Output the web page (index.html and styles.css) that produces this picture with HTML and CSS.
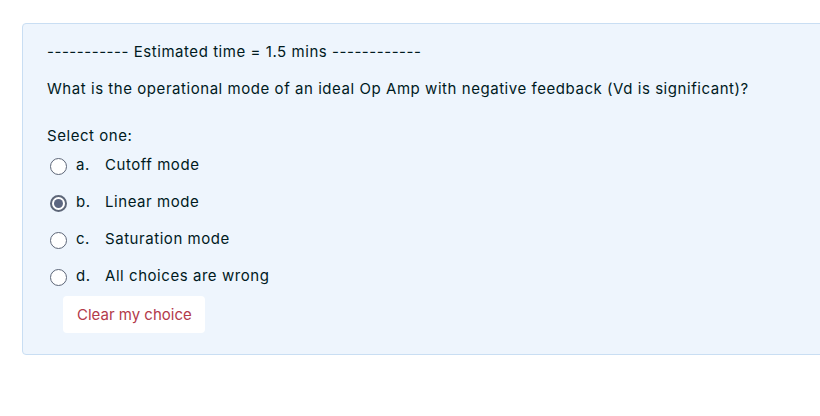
FILE: index.html
```html
<!DOCTYPE html>
<html>
<head>
<meta charset="utf-8">
<link rel="stylesheet" href="styles.css">
</head>
<body>
<div class="page">
  <div class="formulation">
    <p class="note">----------- Estimated time = 1.5 mins ------------</p>
    <p class="qtext">What is the operational mode of an ideal Op Amp with negative feedback (Vd is significant)?</p>
    <div class="prompt">Select one:</div>
    <div class="answers">
      <label class="opt"><span class="radio"></span><span class="letter">a.</span><span>Cutoff mode</span></label>
      <label class="opt"><span class="radio checked"></span><span class="letter">b.</span><span>Linear mode</span></label>
      <label class="opt"><span class="radio"></span><span class="letter">c.</span><span>Saturation mode</span></label>
      <label class="opt"><span class="radio"></span><span class="letter">d.</span><span>All choices are wrong</span></label>
    </div>
    <div class="clear"><span class="clear-btn">Clear my choice</span></div>
  </div>
</div>
</body>
</html>
```
FILE: styles.css
```css
html, body {
  margin: 0;
  padding: 0;
  background: #fff;
  overflow: hidden;
}
body {
  font-family: Inter, "Liberation Sans", sans-serif;
  font-size: 15px;
  letter-spacing: 0.55px;
  color: #001a1e;
}
.page {
  padding: 23px 0 0 22px;
}
.formulation {
  width: 830px;
  box-sizing: border-box;
  height: 332px;
  background: #eef5fd;
  border: 1px solid #c9def3;
  border-radius: 4px;
  padding: 17px 0 0 24px;
}
.note {
  margin: 0;
  line-height: 22px;
}
.qtext {
  margin: 15px 0 0 0;
  line-height: 22px;
}
.prompt {
  margin-top: 25px;
  line-height: 22px;
}
.answers {
  margin-top: 6px;
  display: flex;
  flex-direction: column;
  gap: 15px;
}
.opt {
  display: flex;
  align-items: center;
  height: 22px;
}
.radio {
  width: 17px;
  height: 17px;
  box-sizing: border-box;
  border: 1.5px solid #5d6678;
  border-radius: 50%;
  margin: 0 9px 0 3px;
  position: relative;
  top: 2px;
  background: #fff;
}
.radio.checked {
  border-width: 2px;
}
.radio.checked::after {
  content: "";
  position: absolute;
  left: 2px;
  top: 2px;
  width: 9px;
  height: 9px;
  border-radius: 50%;
  background: #5c6680;
}
.letter {
  width: 29px;
}
.clear {
  margin: 10px 0 0 16px;
}
.clear-btn {
  display: inline-block;
  background: #fff;
  border-radius: 4px;
  padding: 8px 13px 8px 14px;
  line-height: 21px;
  letter-spacing: 0;
  color: #b33a4a;
}
```
